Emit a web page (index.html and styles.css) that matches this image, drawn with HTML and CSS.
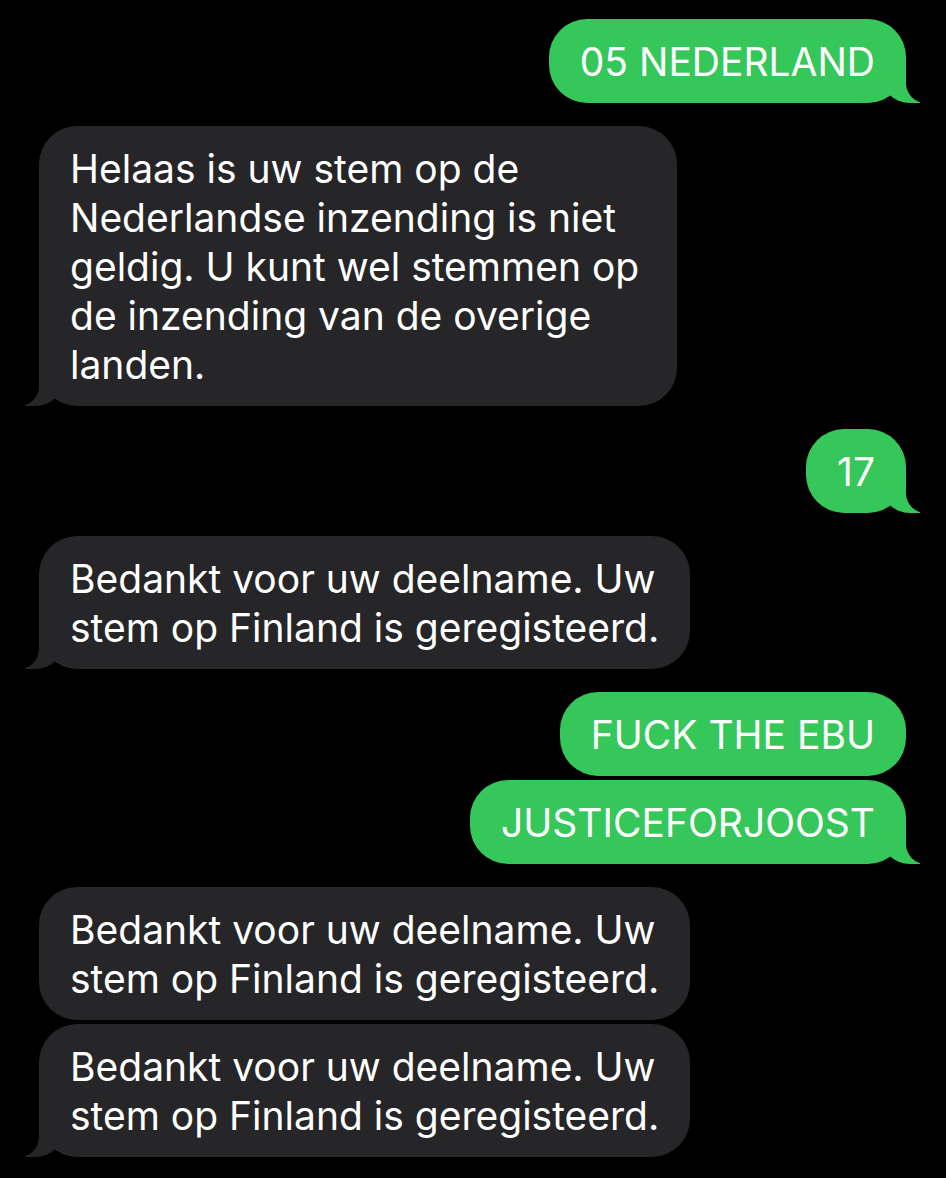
FILE: index.html
```html
<!DOCTYPE html>
<html lang="nl">
<head>
  <meta charset="UTF-8">
  <title>Berichten</title>
  <link rel="stylesheet" href="styles.css">
</head>
<body>

  <div class="thread">

    <div class="group sent">
      <div class="bubble tail">05 NEDERLAND</div>
    </div>

    <div class="group received">
      <div class="bubble tail pad-wide">Helaas is uw stem op de<br>Nederlandse inzending is niet<br>geldig. U kunt wel stemmen op<br>de inzending van de overige<br>landen.</div>
    </div>

    <div class="group sent">
      <div class="bubble tail">17</div>
    </div>

    <div class="group received">
      <div class="bubble tail">Bedankt voor uw deelname. Uw<br>stem op Finland is geregisteerd.</div>
    </div>

    <div class="group sent">
      <div class="bubble">FUCK THE EBU</div>
      <div class="bubble tail">JUSTICEFORJOOST</div>
    </div>

    <div class="group received">
      <div class="bubble">Bedankt voor uw deelname. Uw<br>stem op Finland is geregisteerd.</div>
      <div class="bubble tail">Bedankt voor uw deelname. Uw<br>stem op Finland is geregisteerd.</div>
    </div>

  </div>

</body>
</html>
```

FILE: styles.css
```css
body {
  margin: 0;
  background: #000;
  font-family: Inter, "Noto Sans", sans-serif;
  color: #fff;
}

.thread {
  display: flex;
  flex-direction: column;
  gap: 23px;
  padding: 19px 40px 20px 39px;
}

.group {
  display: flex;
  flex-direction: column;
  gap: 4px;
}

.group.sent {
  align-items: flex-end;
}

.group.received {
  align-items: flex-start;
}

.bubble {
  position: relative;
  padding: 17.5px 31px;
  border-radius: 38px;
  font-size: 39px;
  line-height: 49px;
  white-space: nowrap;
}

.sent .bubble {
  background: #35c759;
}

.received .bubble {
  background: #262628;
}

.pad-wide {
  padding-right: 38px;
}

/* tail: a coloured blob with a black mask cut out of its outer side */
.bubble.tail::before,
.bubble.tail::after {
  content: "";
  position: absolute;
  bottom: 0;
  height: 40px;
}

.sent .bubble.tail::before {
  right: -14px;
  width: 40px;
  background: #35c759;
  border-bottom-left-radius: 30px;
}

.sent .bubble.tail::after {
  right: -20px;
  width: 20px;
  background: #000;
  border-bottom-left-radius: 20px;
}

.received .bubble.tail::before {
  left: -14px;
  width: 40px;
  background: #262628;
  border-bottom-right-radius: 30px;
}

.received .bubble.tail::after {
  left: -20px;
  width: 20px;
  background: #000;
  border-bottom-right-radius: 20px;
}
```
